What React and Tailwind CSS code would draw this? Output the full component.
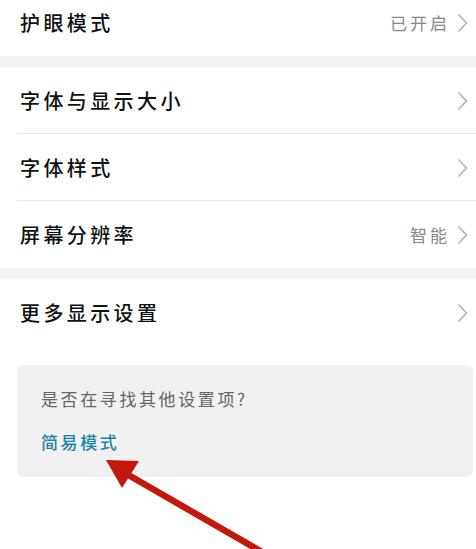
import React from "react";

const Chevron = () => (
    <svg width="11" height="20" viewBox="0 0 11 20" className="ml-[7px] shrink-0">
        <path d="M1.5 1.5 L9.5 10 L1.5 18.5" fill="none" stroke="#b3b3b3" strokeWidth="1.6" />
    </svg>
);

const Row = ({ label, value, divider }) => (
    <div className="h-[67px] flex items-center pl-[20px] pr-[8px] relative">
        <span className="flex-1 text-[20px] tracking-[3.4px] font-medium text-[#111]">{label}</span>
        {value && <span className="text-[17px] tracking-[3px] text-[#888]">{value}</span>}
        <Chevron />
        {divider && <div className="absolute left-[17px] right-0 bottom-0 h-px bg-[#e9e9e9]" />}
    </div>
);

const App = () => {
    return (
        <div className="w-[476px] h-[549px] bg-white relative overflow-hidden" style={{ fontFamily: '"Noto Sans CJK SC", "Noto Sans", sans-serif' }}>
            <div className="-mt-[11px]">
                <Row label="护眼模式" value="已开启" />
            </div>
            <div className="h-[11px] bg-[#f2f2f2]" />
            <Row label="字体与显示大小" divider />
            <Row label="字体样式" divider />
            <Row label="屏幕分辨率" value="智能" />
            <div className="h-[11px] bg-[#f2f2f2]" />
            <Row label="更多显示设置" />
            <div className="pl-[17px] pr-[3px] pt-[19px]">
                <div className="bg-[#f1f1f1] rounded-[6px] h-[112px] pl-[24px] pt-[20px]">
                    <div className="text-[17px] tracking-[2.6px] text-[#666] leading-[28px]">是否在寻找其他设置项?</div>
                    <div className="text-[17px] tracking-[2.6px] font-medium text-[#1a86a6] leading-[28px] mt-[15px]">简易模式</div>
                </div>
            </div>
            <svg className="absolute left-0 top-0 pointer-events-none" width="476" height="549" viewBox="0 0 476 549">
                <line x1="118" y1="469" x2="262" y2="552" stroke="#c2180d" strokeWidth="6.5" />
                <polygon points="106,460 139,461 122,488" fill="#c2180d" />
            </svg>
        </div>
    );
};

export default App;
